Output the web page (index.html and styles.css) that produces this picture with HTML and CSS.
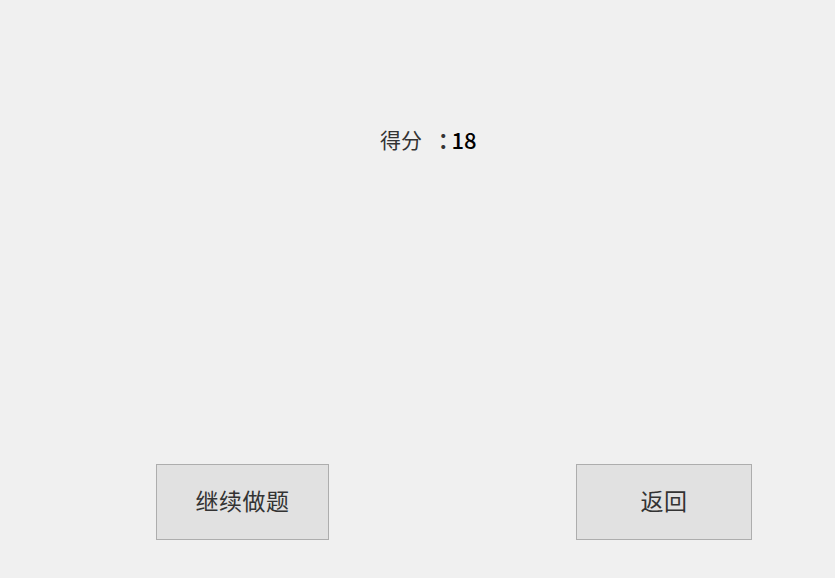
FILE: index.html
```html
<!DOCTYPE html>
<html lang="zh">
<head>
<meta charset="utf-8">
<title>得分</title>
<link rel="stylesheet" href="styles.css">
</head>
<body>
<div class="window">
  <div class="score"><span class="label">得分</span><span class="colon">：</span><span class="num">18</span></div>
  <div class="buttons">
    <button class="btn btn-continue"><span class="btn-text">继续做题</span></button>
    <button class="btn btn-back"><span class="btn-text">返回</span></button>
  </div>
</div>
</body>
</html>
```
FILE: styles.css
```css
html, body {
  margin: 0;
  padding: 0;
  background: #f0f0f0;
}
.window {
  width: 835px;
  height: 578px;
  box-sizing: border-box;
  padding-top: 124px;
  display: flex;
  flex-direction: column;
  font-family: "Noto Sans CJK SC", "Microsoft YaHei", sans-serif;
  color: #000;
}
.score {
  margin-left: 380px;
  font-size: 21px;
  line-height: 30px;
  height: 30px;
  display: flex;
  align-items: center;
}
.score .label {
  color: #333;
}
.score .colon {
  color: #333;
  font-weight: 700;
  font-feature-settings: "halt";
  margin-left: 16px;
}
.score .num {
  font-family: "Noto Sans CJK SC", sans-serif;
  font-size: 22px;
  font-weight: 500;
  color: #000;
  margin-left: 3px;
}
.buttons {
  margin-top: 310px;
  padding-left: 156px;
  display: flex;
  gap: 247px;
}
.btn {
  height: 76px;
  box-sizing: border-box;
  background: #e1e1e1;
  border: 1px solid #adadad;
  font-family: "Noto Sans CJK SC", "SimSun", serif;
  font-size: 23px;
  color: #333;
  padding: 0 0 4px 0;
  display: flex;
  align-items: center;
  justify-content: center;
}
.btn-text {
  letter-spacing: 0.5px;
}
.btn-continue {
  width: 173px;
}
.btn-back {
  width: 176px;
}
```
